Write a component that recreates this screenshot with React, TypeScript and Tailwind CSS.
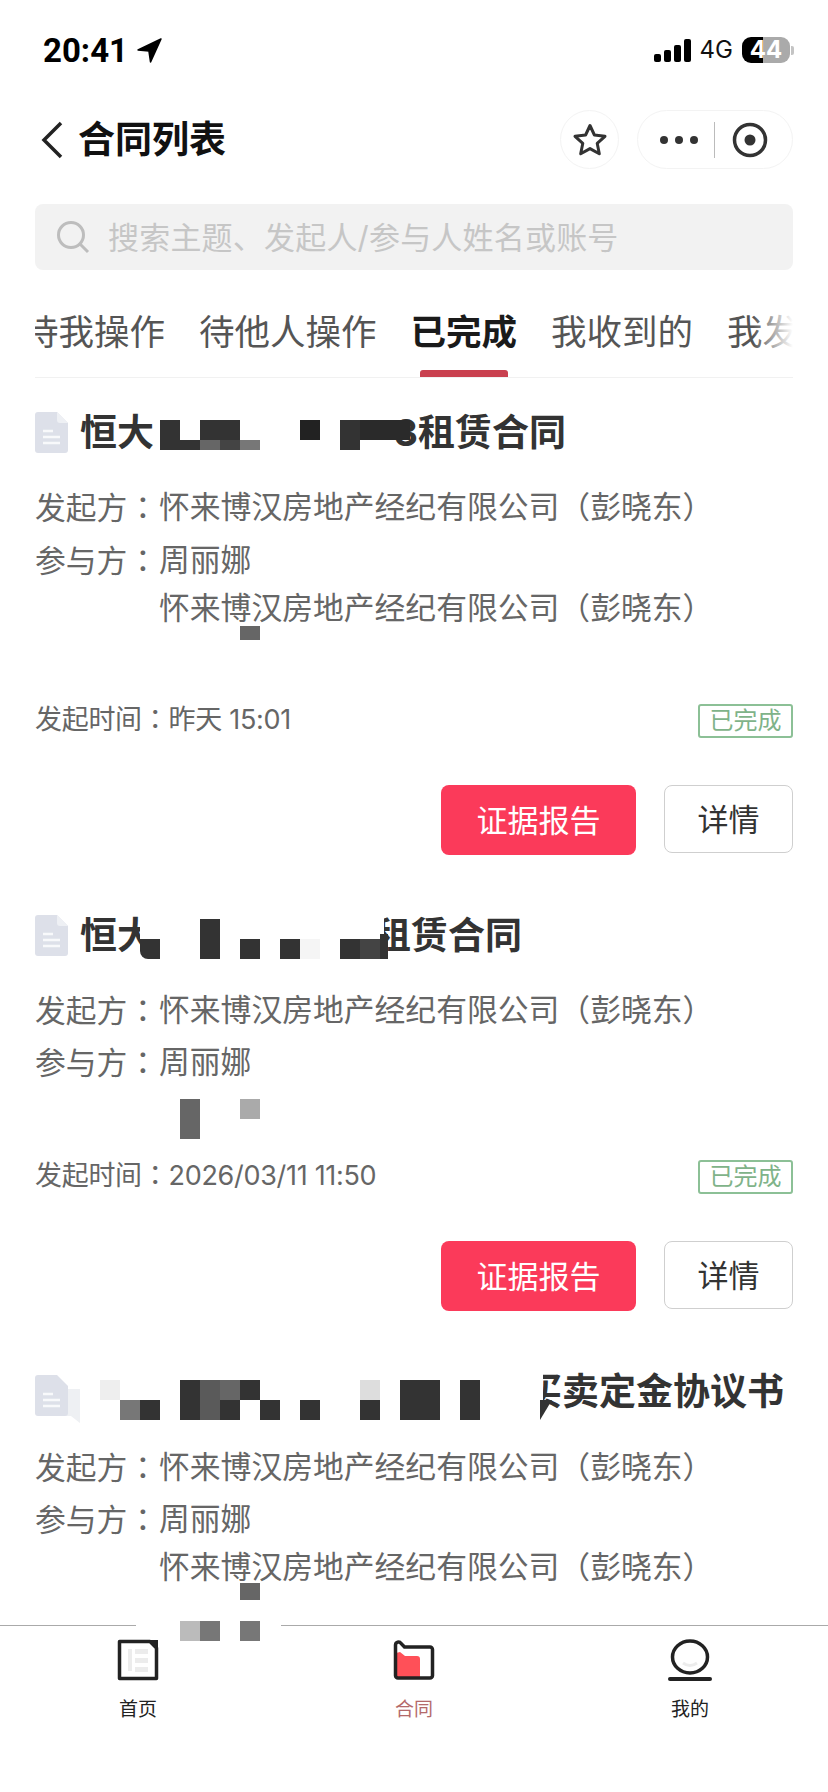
const FONT = 'font-["Inter","Noto_Sans_CJK_SC",sans-serif]';

function Block({ c }: { c: string }) {
  return <span className={"absolute z-10 " + c} />;
}

function Colon() {
  return <span className='font-["Noto_Sans_CJK_TC",sans-serif]'>：</span>;
}

function DocIcon() {
  return (
    <svg width="33" height="41" viewBox="0 0 33 41" className="shrink-0">
      <path d="M3 0H22L33 11V38a3 3 0 0 1-3 3H3a3 3 0 0 1-3-3V3a3 3 0 0 1 3-3Z" fill="#dde0e9" />
      <path d="M22 0L33 11H25a3 3 0 0 1-3-3Z" fill="#eef0f4" />
      <path d="M8 19H18M8 25H25M8 31H25" stroke="#f8f9fb" strokeWidth="2.5" />
    </svg>
  );
}

function ChatDocIcon() {
  return (
    <svg width="45" height="48" viewBox="0 0 45 48" className="mt-[3px] shrink-0 self-start">
      <path d="M14 14H45V48L36 41H14Z" fill="#eef0f3" />
      <path d="M3 0H22L33 11V38a3 3 0 0 1-3 3H3a3 3 0 0 1-3-3V3a3 3 0 0 1 3-3Z" fill="#dde0e9" />
      <path d="M8 19H18M8 25H25M8 31H25" stroke="#f8f9fb" strokeWidth="2.5" />
    </svg>
  );
}

function Line({ label, value, className = "" }: { label?: string; value?: string; className?: string }) {
  return (
    <div className={"flex h-[48px] items-center text-[30.8px] leading-none text-[#666] " + className}>
      <span className="w-[124px] shrink-0 whitespace-nowrap">
        {label}
        {label ? <Colon /> : null}
      </span>
      <span className="whitespace-nowrap">{value}</span>
    </div>
  );
}

function Footer({ time, topClass }: { time: string; topClass: string }) {
  return (
    <>
      <div className={"flex h-[34px] items-center justify-between " + topClass}>
        <span className="-mt-[6px] whitespace-nowrap text-[27px] leading-none tracking-[-0.3px] text-[#666]">
          发起时间
          <Colon />
          {time}
        </span>
        <span className="flex h-[34px] w-[95px] items-center justify-center rounded-[3px] border-2 border-[#8cc096] text-[24px] leading-none text-[#7fb389]">
          已完成
        </span>
      </div>
      <div className="mt-[47px] flex items-start justify-end gap-[28px]">
        <button className="flex h-[70px] w-[195px] items-center justify-center rounded-[8px] bg-[#fb3a5a] text-[31px] leading-none text-white">
          证据报告
        </button>
        <button className="flex h-[68px] w-[129px] items-center justify-center rounded-[8px] border border-[#cfcfcf] text-[31px] leading-none text-[#333]">
          详情
        </button>
      </div>
    </>
  );
}

const COMPANY = "怀来博汉房地产经纪有限公司（彭晓东）";

export default function App() {
  return (
    <div className={"relative flex h-[1792px] w-[828px] flex-col overflow-hidden bg-white " + FONT}>
      {/* status bar */}
      <div className="flex h-[100px] shrink-0 items-center justify-between pl-[43px] pr-[34px]">
        <div className="flex items-center gap-[9px]">
          <span className='font-["Roboto",sans-serif] text-[33px] font-bold leading-none text-black'>20:41</span>
          <svg width="25" height="25" viewBox="0 0 24 24">
            <path d="M23 1L1 11.5L11.5 12.5L13 23Z" fill="#000" stroke="#000" strokeWidth="1.5" strokeLinejoin="round" />
          </svg>
        </div>
        <div className="flex items-center">
          <div className="flex h-[23px] items-end gap-[3px]">
            <span className="h-[8px] w-[7px] rounded-[2px] bg-black" />
            <span className="h-[12px] w-[7px] rounded-[2px] bg-black" />
            <span className="h-[17px] w-[7px] rounded-[2px] bg-black" />
            <span className="h-[23px] w-[7px] rounded-[2px] bg-black" />
          </div>
          <span className="ml-[9px] text-[24px] leading-none text-[#111]">4G</span>
          <div className="ml-[9px] flex h-[26px] w-[48px] items-center justify-center rounded-[9px] bg-[linear-gradient(90deg,#000_44%,#aaa_44%)] text-[24px] font-bold leading-none text-white">
            44
          </div>
          <span className="ml-[1px] h-[9px] w-[3px] rounded-r-[2px] bg-[#c4c4c4]" />
        </div>
      </div>

      {/* nav */}
      <div className="mt-[10px] flex h-[59px] shrink-0 items-center pl-[40px] pr-[35px]">
        <svg width="24" height="38" viewBox="0 0 24 38">
          <path d="M21 2L4 19L21 36" fill="none" stroke="#222" strokeWidth="3.5" />
        </svg>
        <span className="ml-[14px] text-[37px] font-semibold leading-none text-[#111]">合同列表</span>
        <div className="ml-auto flex h-[59px] w-[59px] items-center justify-center rounded-full border border-[#f3f3f3]">
          <svg width="36" height="36" viewBox="0 0 36 36">
            <path
              d="M18 3.5L22.4 13L33 14.3L25.2 21.3L27.3 31.8L18 26.6L8.7 31.8L10.8 21.3L3 14.3L13.6 13Z"
              fill="none"
              stroke="#333"
              strokeWidth="3"
              strokeLinejoin="round"
            />
          </svg>
        </div>
        <div className="ml-[18px] flex h-[59px] w-[156px] items-center rounded-full border border-[#f3f3f3] pl-[22px]">
          <div className="flex w-[38px] justify-between">
            <span className="h-[8px] w-[8px] rounded-full bg-[#333]" />
            <span className="h-[8px] w-[8px] rounded-full bg-[#333]" />
            <span className="h-[8px] w-[8px] rounded-full bg-[#333]" />
          </div>
          <span className="ml-[16px] h-[36px] w-px bg-[#bbb]" />
          <svg width="36" height="36" viewBox="0 0 36 36" className="ml-[17px]">
            <circle cx="18" cy="18" r="15.5" fill="none" stroke="#333" strokeWidth="3.5" />
            <circle cx="18" cy="18" r="5.5" fill="#333" />
          </svg>
        </div>
      </div>

      {/* search */}
      <div className="mx-[35px] mt-[35px] flex h-[66px] shrink-0 items-center rounded-[8px] bg-[#f2f2f2] pl-[21px]">
        <svg width="34" height="34" viewBox="0 0 34 34">
          <circle cx="15" cy="15" r="12.5" fill="none" stroke="#bdbdbd" strokeWidth="3" />
          <path d="M24 24L32 32" stroke="#bdbdbd" strokeWidth="3" />
        </svg>
        <span className="ml-[18px] whitespace-nowrap text-[31px] leading-none tracking-[0.2px] text-[#c6c6c6]">
          搜索主题、发起人/参与人姓名或账号
        </span>
      </div>

      {/* tabs */}
      <div className="relative mx-[35px] mt-[30px] h-[78px] shrink-0 overflow-hidden border-b border-[#f1f1f1]">
        <div className="-ml-[12px] flex h-[66px] items-center gap-[34px] whitespace-nowrap text-[35.5px] leading-none text-[#555]">
          <span>待我操作</span>
          <span>待他人操作</span>
          <span className="font-semibold text-[#1a1a1a]">已完成</span>
          <span>我收到的</span>
          <span>我发起的</span>
        </div>
        <span className="absolute bottom-0 right-0 top-0 w-[40px] bg-[linear-gradient(90deg,rgba(255,255,255,0),#fff)]" />
        <span className="absolute bottom-0 left-[385px] h-[7px] w-[88px] rounded-t-[3px] bg-[#c9404f]" />
      </div>

      {/* list */}
      <div className="min-h-0 flex-1 overflow-hidden px-[35px] pt-[34px]">
        {/* card 1 */}
        <div className="relative">
          <div className="flex h-[41px] items-center gap-[12px] whitespace-nowrap text-[37px] font-bold leading-none text-[#333]">
            <DocIcon />
            <span>恒大</span>
            <span className="-ml-[12px] w-[240px] shrink-0" />
            <span className="-ml-[12px]">3租赁合同</span>
          </div>
          <Block c="left-[125px] top-[8px] h-[30px] w-[20px] bg-[#333]" />
          <Block c="left-[145px] top-[28px] h-[10px] w-[20px] bg-[#333]" />
          <Block c="left-[145px] top-[8px] h-[20px] w-[20px] bg-white" />
          <Block c="left-[165px] top-[8px] h-[20px] w-[40px] bg-[#333]" />
          <Block c="left-[165px] top-[28px] h-[10px] w-[20px] bg-[#666]" />
          <Block c="left-[185px] top-[28px] h-[10px] w-[20px] bg-[#444]" />
          <Block c="left-[205px] top-[28px] h-[10px] w-[20px] bg-[#777]" />
          <Block c="left-[265px] top-[8px] h-[20px] w-[20px] bg-[#222]" />
          <Block c="left-[305px] top-[8px] h-[30px] w-[20px] bg-[#333]" />
          <Block c="left-[325px] top-[8px] h-[20px] w-[50px] bg-[#2a2a2a]" />
          <Block c="left-[205px] top-[214px] h-[14px] w-[20px] bg-[#666]" />
          <Line label="发起方" value={COMPANY} className="mt-[30px]" />
          <Line label="参与方" value="周丽娜" className="mt-[5px]" />
          <Line value={COMPANY} />
          <Line />
          <Footer time="昨天 15:01" topClass="mt-[24px]" />
        </div>

        {/* card 2 */}
        <div className="relative mt-[59px]">
          <div className="flex h-[41px] items-center gap-[12px] whitespace-nowrap pt-[1px] text-[37px] font-bold leading-none text-[#333]">
            <DocIcon />
            <span>恒大</span>
            <span className="-ml-[12px] w-[220px] shrink-0" />
            <span className="-ml-[12px]">租赁合同</span>
          </div>
          <Block c="left-[105px] top-0 h-[45px] w-[20px] bg-white" />
          <Block c="left-[105px] top-[25px] h-[20px] w-[20px] rounded-bl-[8px] bg-[#333]" />
          <Block c="left-[165px] top-[5px] h-[40px] w-[20px] bg-[#333]" />
          <Block c="left-[205px] top-[25px] h-[20px] w-[20px] bg-[#333]" />
          <Block c="left-[245px] top-[25px] h-[20px] w-[20px] bg-[#333]" />
          <Block c="left-[265px] top-[25px] h-[20px] w-[20px] bg-[#f5f5f5]" />
          <Block c="left-[305px] top-[25px] h-[20px] w-[20px] bg-[#333]" />
          <Block c="left-[325px] top-[25px] h-[20px] w-[20px] bg-[#444]" />
          <Block c="left-[337px] top-0 h-[25px] w-[12px] bg-white" />
          <Block c="left-[345px] top-[20px] h-[25px] w-[8px] bg-[#333]" />
          <Block c="left-[145px] top-[185px] h-[40px] w-[20px] bg-[#666]" />
          <Block c="left-[205px] top-[185px] h-[20px] w-[20px] bg-[#aaa]" />
          <Line label="发起方" value={COMPANY} className="mt-[31px]" />
          <Line label="参与方" value="周丽娜" className="mt-[4px]" />
          <Line />
          <Footer time="2026/03/11 11:50" topClass="mt-[26px]" />
        </div>

        {/* card 3 */}
        <div className="relative mt-[59px]">
          <div className="flex h-[41px] items-center whitespace-nowrap pt-[2px] text-[37px] font-bold leading-none text-[#333]">
            <ChatDocIcon />
            <span className="w-[445px] shrink-0" />
            <span>买卖定金协议书</span>
          </div>
          <Block c="left-[65px] top-[10px] h-[20px] w-[20px] bg-[#eee]" />
          <Block c="left-[85px] top-[30px] h-[20px] w-[20px] bg-[#777]" />
          <Block c="left-[105px] top-[30px] h-[20px] w-[20px] bg-[#333]" />
          <Block c="left-[145px] top-[10px] h-[40px] w-[20px] bg-[#333]" />
          <Block c="left-[165px] top-[10px] h-[40px] w-[20px] bg-[#5a5a5a]" />
          <Block c="left-[185px] top-[10px] h-[20px] w-[20px] bg-[#666]" />
          <Block c="left-[185px] top-[30px] h-[20px] w-[20px] bg-[#333]" />
          <Block c="left-[205px] top-[10px] h-[20px] w-[20px] bg-[#333]" />
          <Block c="left-[225px] top-[30px] h-[20px] w-[20px] bg-[#333]" />
          <Block c="left-[265px] top-[30px] h-[20px] w-[20px] bg-[#333]" />
          <Block c="left-[325px] top-[10px] h-[20px] w-[20px] bg-[#ddd]" />
          <Block c="left-[325px] top-[30px] h-[20px] w-[20px] bg-[#333]" />
          <Block c="left-[365px] top-[10px] h-[40px] w-[40px] bg-[#333]" />
          <Block c="left-[425px] top-[10px] h-[40px] w-[20px] bg-[#333]" />
          <Block c="left-[488px] top-0 h-[48px] w-[20px] bg-white" />
          <Block c="left-[505px] top-[30px] h-[20px] w-[12px] bg-[#333] [clip-path:polygon(0_0,100%_0,0_100%)]" />
          <Block c="left-[205px] top-[213px] h-[17px] w-[20px] bg-[#666]" />
          <Line label="发起方" value={COMPANY} className="mt-[32px]" />
          <Line label="参与方" value="周丽娜" className="mt-[4px]" />
          <Line value={COMPANY} />
        </div>
      </div>

      {/* tab bar */}
      <div className="relative grid h-[167px] shrink-0 grid-cols-3 border-t border-[#aaa] bg-white pt-[13px]">
        <span className="absolute left-[136px] -top-[6px] h-[12px] w-[145px] bg-white" />
        <span className="absolute left-[180px] -top-[5px] h-[20px] w-[20px] bg-[#bbb]" />
        <span className="absolute left-[200px] -top-[5px] h-[20px] w-[20px] bg-[#777]" />
        <span className="absolute left-[240px] -top-[5px] h-[20px] w-[20px] bg-[#777]" />
        <div className="flex flex-col items-center">
          <svg width="42" height="42" viewBox="0 0 42 42">
            <path d="M2.5 2.5H33L39.5 9V39.5H2.5Z" fill="#fff" stroke="#222" strokeWidth="3.5" strokeLinejoin="round" />
            <path d="M33 1H41V9Z" fill="#222" />
            <path d="M11 10H15V32H11ZM18 10H31V15H18ZM18 19H31V24H18ZM18 28H31V33H18Z" fill="#ececec" />
          </svg>
          <span className="mt-[19px] text-[19px] leading-none text-[#222]">首页</span>
        </div>
        <div className="flex flex-col items-center">
          <svg width="42" height="42" viewBox="0 0 42 42">
            <path d="M3 6a3 3 0 0 1 5.4-2L12 7H37a3 3 0 0 1 3 3V36a3 3 0 0 1-3 3H6a3 3 0 0 1-3-3Z" fill="#fff" />
            <path d="M3 14L7 13L12 17H24a3 3 0 0 1 3 3V39H6a3 3 0 0 1-3-3Z" fill="#ff5058" />
            <path d="M2.5 6a3 3 0 0 1 5.5-1.6L11.5 8H37a2.5 2.5 0 0 1 2.5 2.5V36.5A2.5 2.5 0 0 1 37 39H5a2.5 2.5 0 0 1-2.5-2.5Z" fill="none" stroke="#222" strokeWidth="3.5" strokeLinejoin="round" />
          </svg>
          <span className="mt-[19px] text-[19px] leading-none text-[#b4696a]">合同</span>
        </div>
        <div className="flex flex-col items-center">
          <svg width="46" height="42" viewBox="0 0 46 42">
            <ellipse cx="23" cy="18" rx="17.5" ry="16" fill="#fff" stroke="#222" strokeWidth="3.5" />
            <path d="M16 24q7 5 14 0" fill="none" stroke="#ececec" strokeWidth="3" />
            <path d="M3 40H43" stroke="#222" strokeWidth="4" strokeLinecap="round" />
          </svg>
          <span className="mt-[19px] text-[19px] leading-none text-[#222]">我的</span>
        </div>
      </div>
    </div>
  );
}
